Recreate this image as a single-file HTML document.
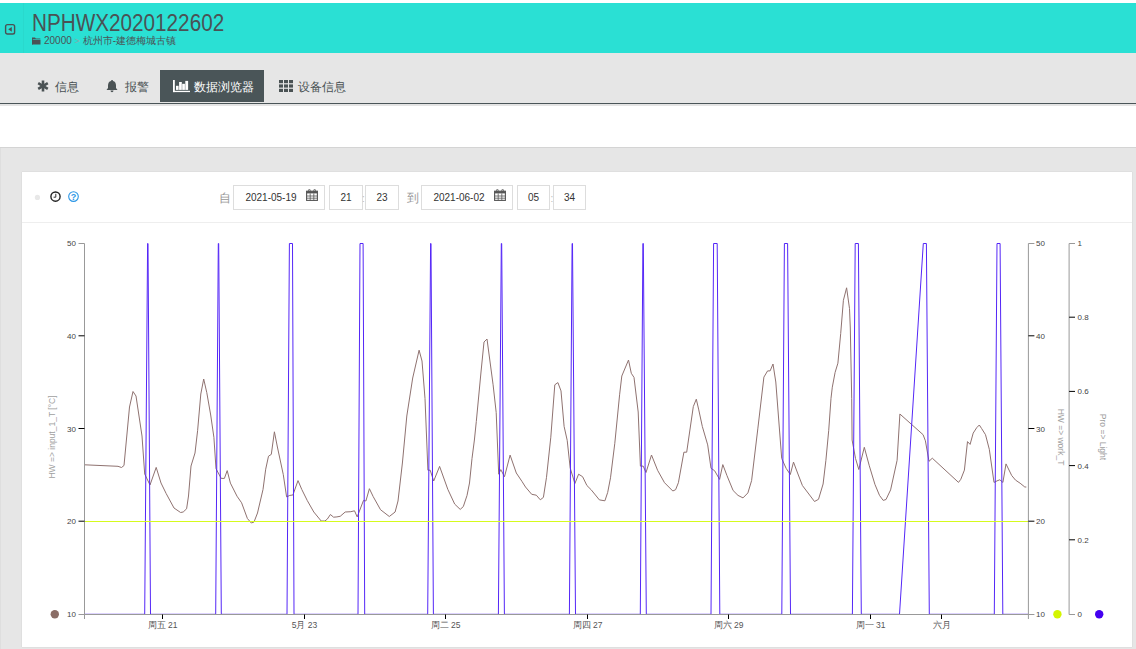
<!DOCTYPE html>
<html><head><meta charset="utf-8">
<style>
*{box-sizing:border-box;margin:0;padding:0}
html,body{width:1136px;height:649px;overflow:hidden;background:#e6e6e6;font-family:"Liberation Sans",sans-serif;position:relative}
.abs{position:absolute}
#top{left:0;top:0;width:1136px;height:3px;background:#fff}
#hdr{left:0;top:3px;width:1136px;height:50px;background:#2ae0d4}
#hdrdiv{left:22.5px;top:3px;width:1px;height:50px;background:#29d9cd}
#title{left:31.5px;top:9.5px;font-size:23px;color:#4a5254;line-height:26px;white-space:nowrap;transform:scaleX(0.9);transform-origin:0 0}
#sub{left:44px;top:35px;font-size:10px;color:#4a5254;line-height:12px;white-space:nowrap}
#tabs{left:0;top:53px;width:1136px;height:50px;background:#e6e6e6}
#tabline{left:0;top:103px;width:1136px;height:1px;background:#4a5558}
#tabline2{left:0;top:104px;width:1136px;height:2px;background:#e4e4e4}
.tab{top:70px;height:32px;font-size:12px;color:#4a5254;line-height:34px;white-space:nowrap}
#act{left:160px;width:104px;background:#4a5558;color:#fff}
#strip{left:0;top:106px;width:1136px;height:41px;background:#fff}
#stripb{left:0;top:147px;width:1136px;height:1px;background:#d4d4d4}
#panel{left:22px;top:172px;width:1110px;height:475px;background:#fff;box-shadow:0 0 1px rgba(0,0,0,.18)}
#tbline{left:22px;top:222px;width:1110px;height:1px;background:#eee}
.box{top:185px;height:25px;border:1px solid #ddd;background:#fff;font-size:10px;color:#333;line-height:23px;text-align:center;white-space:nowrap}
.lbl{top:186px;font-size:12px;color:#999;line-height:25px}
svg.full{position:absolute;left:0;top:0}
</style></head><body>
<div class="abs" id="top"></div>
<div class="abs" id="hdr"></div>
<div class="abs" id="hdrdiv"></div>
<svg class="abs" style="left:4px;top:23px" width="12" height="12" viewBox="0 0 12 12"><rect x="1.6" y="1.6" width="9" height="9.4" rx="1.8" fill="none" stroke="#4a5254" stroke-width="1.4"/><path d="M4.2,6.3 L7.8,3.9 V8.7 Z" fill="#4a5254"/></svg>
<div class="abs" id="title">NPHWX2020122602</div>
<svg class="abs" style="left:32px;top:36.5px" width="9" height="8" viewBox="0 0 9 8"><path d="M0,0.5 H3 L3.8,1.4 H8.3 V2.2 H0.8 V7.5 H0 Z" fill="#4a5254"/><rect x="0" y="2.8" width="8.5" height="4.7" fill="#4a5254"/></svg>
<div class="abs" id="sub">20000 <span style="color:#8aa;font-size:9px">&gt;</span> 杭州市-建德梅城古镇</div>
<div class="abs" id="tabs"></div>
<div class="abs tab" id="act"></div>
<div class="abs" id="tabline"></div>
<div class="abs" id="tabline2"></div>
<!-- tab contents -->
<svg class="abs" style="left:37px;top:80px" width="12" height="12" viewBox="0 0 12 12"><g stroke="#4a5254" stroke-width="2.6" stroke-linecap="butt"><line x1="6" y1="0.5" x2="6" y2="11.5"/><line x1="1.2" y1="3.2" x2="10.8" y2="8.8"/><line x1="1.2" y1="8.8" x2="10.8" y2="3.2"/></g></svg>
<div class="abs tab" style="left:55px">信息</div>
<svg class="abs" style="left:105px;top:79px" width="14" height="14" viewBox="0 0 14 14"><path d="M7,1 C7.6,1 8,1.4 8,1.9 C10,2.4 11,4 11,6.5 V9 L12.5,11 H1.5 L3,9 V6.5 C3,4 4,2.4 6,1.9 C6,1.4 6.4,1 7,1 Z" fill="#4a5254"/><path d="M5.5,11.6 H8.5 C8.4,12.5 7.8,13.2 7,13.2 C6.2,13.2 5.6,12.5 5.5,11.6Z" fill="#4a5254"/></svg>
<div class="abs tab" style="left:125px">报警</div>
<svg class="abs" style="left:168px;top:74px" width="30" height="24" viewBox="0 0 30 24"><g fill="#fff"><rect x="5" y="6" width="1.8" height="12.1"/><rect x="5" y="16.8" width="17" height="1.3"/><rect x="8" y="11.8" width="2.6" height="4.1"/><rect x="11.1" y="8" width="2.7" height="7.9"/><rect x="14.2" y="9.8" width="2.7" height="6.1"/><rect x="17.3" y="6.9" width="2.8" height="9"/></g></svg>
<div class="abs tab" style="left:194px;color:#fff">数据浏览器</div>
<svg class="abs" style="left:279px;top:80px" width="14" height="12" viewBox="0 0 14 12"><g fill="#4a5254"><rect x="0" y="0" width="4" height="3.2"/><rect x="5" y="0" width="4" height="3.2"/><rect x="10" y="0" width="4" height="3.2"/><rect x="0" y="4.4" width="4" height="3.2"/><rect x="5" y="4.4" width="4" height="3.2"/><rect x="10" y="4.4" width="4" height="3.2"/><rect x="0" y="8.8" width="4" height="3.2"/><rect x="5" y="8.8" width="4" height="3.2"/><rect x="10" y="8.8" width="4" height="3.2"/></g></svg>
<div class="abs tab" style="left:298px">设备信息</div>
<div class="abs" id="strip"></div>
<div class="abs" id="stripb"></div>
<div class="abs" style="left:0;top:148px;width:1px;height:501px;background:#dedede"></div>
<div class="abs" id="panel"></div>
<div class="abs" id="tbline"></div>
<!-- toolbar -->
<svg class="abs" style="left:30px;top:189px" width="52" height="16" viewBox="0 0 52 16"><circle cx="7.4" cy="8.4" r="2.6" fill="#e8e8e8"/><circle cx="25.5" cy="7.6" r="4.6" fill="none" stroke="#222" stroke-width="1.4"/><path d="M25.8,4.8 V8.2 H23.6" fill="none" stroke="#333" stroke-width="1"/><circle cx="43.5" cy="7.6" r="4.8" fill="none" stroke="#2a96e6" stroke-width="1.1"/><text x="43.5" y="11" text-anchor="middle" style="font-family:'Liberation Sans',sans-serif;font-size:9px;font-weight:bold;fill:#2a96e6">?</text></svg>
<div class="abs lbl" style="left:219px">自</div>
<div class="abs box" style="left:233px;width:92px;padding-right:16px">2021-05-19</div>
<div class="abs box" style="left:329px;width:34px">21</div>
<div class="abs lbl" style="left:362px;font-size:10px;color:#bbb">:</div>
<div class="abs box" style="left:365px;width:34px">23</div>
<div class="abs lbl" style="left:407px">到</div>
<div class="abs box" style="left:421px;width:92px;padding-right:16px">2021-06-02</div>
<div class="abs box" style="left:517px;width:33px">05</div>
<div class="abs lbl" style="left:550.5px;font-size:10px;color:#bbb">:</div>
<div class="abs box" style="left:553px;width:33px">34</div>
<svg class="abs" style="left:306px;top:189px" width="12" height="12" viewBox="0 0 12 12"><rect x="0.6" y="2.2" width="10.8" height="9.2" fill="none" stroke="#555" stroke-width="1.1"/><rect x="0.6" y="2.2" width="10.8" height="2.2" fill="#555"/><g stroke="#555" stroke-width="0.8"><line x1="0.6" y1="7" x2="11.4" y2="7"/><line x1="0.6" y1="9.2" x2="11.4" y2="9.2"/><line x1="4.2" y1="4.4" x2="4.2" y2="11.4"/><line x1="7.8" y1="4.4" x2="7.8" y2="11.4"/></g><rect x="2.6" y="0.3" width="1.6" height="3" rx="0.8" fill="none" stroke="#555" stroke-width="0.8"/><rect x="7.8" y="0.3" width="1.6" height="3" rx="0.8" fill="none" stroke="#555" stroke-width="0.8"/></svg>
<svg class="abs" style="left:494px;top:189px" width="12" height="12" viewBox="0 0 12 12"><rect x="0.6" y="2.2" width="10.8" height="9.2" fill="none" stroke="#555" stroke-width="1.1"/><rect x="0.6" y="2.2" width="10.8" height="2.2" fill="#555"/><g stroke="#555" stroke-width="0.8"><line x1="0.6" y1="7" x2="11.4" y2="7"/><line x1="0.6" y1="9.2" x2="11.4" y2="9.2"/><line x1="4.2" y1="4.4" x2="4.2" y2="11.4"/><line x1="7.8" y1="4.4" x2="7.8" y2="11.4"/></g><rect x="2.6" y="0.3" width="1.6" height="3" rx="0.8" fill="none" stroke="#555" stroke-width="0.8"/><rect x="7.8" y="0.3" width="1.6" height="3" rx="0.8" fill="none" stroke="#555" stroke-width="0.8"/></svg>
<svg class="full" width="1136" height="649" viewBox="0 0 1136 649">
<path d="M84.5,464.8 L118.0,466.3 L121.5,467.5 L124.0,465.5 L129.5,407.0 L133.0,391.5 L136.0,396.0 L142.0,436.0 L144.7,474.0 L150.0,485.0 L156.2,467.4 L161.0,483.0 L166.2,493.6 L174.0,508.0 L180.6,512.5 L183.2,512.0 L186.6,508.8 L188.5,496.0 L191.0,466.0 L195.0,453.0 L197.6,430.7 L200.8,394.0 L203.7,379.0 L206.8,392.7 L210.7,415.0 L213.9,437.3 L216.0,468.7 L221.2,478.4 L224.4,478.4 L227.2,470.6 L230.4,483.1 L237.0,496.2 L241.6,502.8 L247.4,518.5 L251.3,523.0 L254.0,522.0 L257.5,513.0 L263.0,489.5 L265.7,469.2 L268.5,456.2 L271.3,454.4 L274.4,431.8 L277.4,447.0 L283.3,474.7 L286.6,496.9 L289.8,495.4 L292.9,495.0 L298.0,480.6 L301.8,489.5 L307.3,500.6 L313.8,512.0 L321.2,521.0 L324.9,521.0 L327.3,519.1 L330.4,514.5 L333.6,517.2 L336.9,516.9 L340.2,516.3 L345.2,512.0 L350.8,511.7 L354.5,510.8 L357.2,516.9 L363.5,500.4 L365.9,501.0 L369.4,488.7 L373.2,496.6 L380.5,509.7 L389.3,516.5 L395.1,512.0 L398.0,501.0 L402.4,463.0 L406.8,416.0 L412.7,378.0 L419.1,350.2 L422.0,361.0 L425.0,398.5 L427.9,470.2 L430.2,470.2 L433.7,481.0 L439.6,466.4 L447.8,489.3 L454.7,504.1 L460.2,509.4 L463.3,506.6 L467.0,495.5 L469.5,483.0 L472.0,458.5 L474.4,440.0 L476.3,421.5 L481.0,372.0 L484.0,342.0 L487.0,339.0 L493.1,384.8 L496.2,412.5 L498.7,474.2 L500.8,469.6 L504.5,476.7 L510.1,455.1 L516.3,473.0 L521.9,481.3 L525.5,487.0 L531.7,494.3 L536.3,495.2 L540.3,499.8 L543.4,497.4 L546.5,477.3 L550.8,437.2 L554.8,384.8 L557.9,382.6 L561.0,390.9 L564.1,426.4 L567.2,440.3 L570.2,468.0 L574.9,483.5 L578.6,474.2 L582.6,476.7 L586.9,485.5 L591.1,489.7 L599.4,499.9 L604.9,500.8 L607.7,492.4 L610.5,477.8 L614.8,443.3 L619.6,394.8 L621.8,376.0 L628.5,360.0 L631.3,373.3 L634.0,377.4 L638.2,412.0 L640.4,466.1 L643.2,466.1 L646.0,472.5 L651.5,455.0 L657.6,470.3 L664.5,482.7 L672.8,491.0 L675.6,489.7 L678.4,482.7 L683.9,452.2 L686.7,452.2 L693.3,406.6 L696.3,399.2 L698.6,409.1 L702.3,426.4 L707.7,444.9 L711.0,468.3 L714.6,470.7 L719.6,479.4 L722.8,464.6 L727.0,475.7 L733.1,490.5 L738.0,495.4 L743.0,497.9 L747.9,492.9 L751.6,480.6 L757.8,428.9 L763.9,377.1 L767.6,370.9 L770.1,370.9 L773.0,364.0 L775.8,382.0 L781.7,458.4 L786.1,468.3 L790.3,474.5 L793.5,462.1 L797.2,472.0 L802.4,485.5 L814.5,501.5 L818.5,499.3 L823.1,484.0 L825.9,460.3 L828.7,430.7 L831.0,398.3 L832.3,387.2 L835.1,372.4 L837.9,363.2 L840.7,333.6 L843.4,300.3 L846.6,287.8 L849.5,308.6 L850.3,328.0 L851.7,398.3 L852.1,440.0 L855.5,458.4 L858.8,469.5 L864.3,447.3 L869.3,465.8 L874.9,484.3 L879.5,495.4 L883.2,500.4 L886.0,499.5 L890.6,489.9 L897.1,460.3 L899.9,414.0 L923.1,434.7 L925.4,440.8 L929.0,461.3 L932.3,458.2 L958.5,482.4 L960.8,479.3 L964.4,470.1 L967.5,441.6 L970.1,444.4 L973.2,433.1 L976.7,427.7 L979.3,425.0 L981.6,428.5 L985.5,434.7 L989.3,449.3 L994.0,482.4 L997.0,480.9 L999.8,479.8 L1002.9,482.4 L1006.0,463.9 L1011.7,475.5 L1015.5,480.1 L1020.1,483.2 L1024.8,487.0 L1026.3,487.0" fill="none" stroke="#8f7270" stroke-width="1"/>
<path d="M84.5,614.3 L144.7,614.3 L147.6,243.5 L148.0,243.5 L150.5,614.3 L215.7,614.3 L218.3,243.5 L218.7,243.5 L221.3,614.3 L287.0,614.3 L289.4,243.5 L292.5,243.5 L294.0,614.3 L358.0,614.3 L360.0,243.5 L363.1,243.5 L364.7,614.3 L427.7,614.3 L430.6,243.5 L431.0,243.5 L433.4,614.3 L498.4,614.3 L501.3,243.5 L501.7,243.5 L504.4,614.3 L569.4,614.3 L572.1,243.5 L572.5,243.5 L575.5,614.3 L640.3,614.3 L642.9,243.5 L643.3,243.5 L646.3,614.3 L711.0,614.3 L713.6,243.5 L717.2,243.5 L719.8,614.3 L781.8,614.3 L784.4,243.5 L787.6,243.5 L790.5,614.3 L852.4,614.3 L855.2,243.5 L858.4,243.5 L861.3,614.3 L899.5,614.3 L923.3,243.5 L926.4,243.5 L929.3,614.3 L994.3,614.3 L997.0,243.5 L1000.1,243.5 L1002.8,614.3 L1028.4,614.3" fill="none" stroke="#5426f7" stroke-width="1" stroke-linejoin="miter" stroke-miterlimit="3"/>
<line x1="84.5" x2="1028.4" y1="521.5" y2="521.5" stroke="#d6fb1e" stroke-width="1"/>
<path d="M78.5,243.5 H84.5 V614.5 H78.5" fill="none" stroke="#999" stroke-width="1"/>
<line x1="78.5" x2="84.5" y1="335.8" y2="335.8" stroke="#000"/>
<line x1="78.5" x2="84.5" y1="428.5" y2="428.5" stroke="#000"/>
<line x1="78.5" x2="84.5" y1="521.2" y2="521.2" stroke="#000"/>
<text x="76" y="246.0" text-anchor="end" style='font-family:"Liberation Sans",sans-serif;font-size:8px;fill:#444'>50</text>
<text x="76" y="338.8" text-anchor="end" style='font-family:"Liberation Sans",sans-serif;font-size:8px;fill:#444'>40</text>
<text x="76" y="431.5" text-anchor="end" style='font-family:"Liberation Sans",sans-serif;font-size:8px;fill:#444'>30</text>
<text x="76" y="524.2" text-anchor="end" style='font-family:"Liberation Sans",sans-serif;font-size:8px;fill:#444'>20</text>
<text x="76" y="617.0" text-anchor="end" style='font-family:"Liberation Sans",sans-serif;font-size:8px;fill:#444'>10</text>
<path d="M1034.4,243.5 H1028.4 V614.5 H1034.4" fill="none" stroke="#999"/>
<line x1="1028.4" x2="1034.4" y1="335.8" y2="335.8" stroke="#000"/>
<line x1="1028.4" x2="1034.4" y1="428.5" y2="428.5" stroke="#000"/>
<line x1="1028.4" x2="1034.4" y1="521.2" y2="521.2" stroke="#000"/>
<text x="1036" y="246.0" style='font-family:"Liberation Sans",sans-serif;font-size:8px;fill:#444'>50</text>
<text x="1036" y="338.8" style='font-family:"Liberation Sans",sans-serif;font-size:8px;fill:#444'>40</text>
<text x="1036" y="431.5" style='font-family:"Liberation Sans",sans-serif;font-size:8px;fill:#444'>30</text>
<text x="1036" y="524.2" style='font-family:"Liberation Sans",sans-serif;font-size:8px;fill:#444'>20</text>
<text x="1036" y="617.0" style='font-family:"Liberation Sans",sans-serif;font-size:8px;fill:#444'>10</text>
<path d="M1075,243.5 H1069.1 V614.5 H1075" fill="none" stroke="#999"/>
<text x="1077.5" y="246.0" style='font-family:"Liberation Sans",sans-serif;font-size:8px;fill:#444'>1</text>
<line x1="1069.1" x2="1075" y1="317.2" y2="317.2" stroke="#000"/>
<text x="1077.5" y="320.2" style='font-family:"Liberation Sans",sans-serif;font-size:8px;fill:#444'>0.8</text>
<line x1="1069.1" x2="1075" y1="391.4" y2="391.4" stroke="#000"/>
<text x="1077.5" y="394.4" style='font-family:"Liberation Sans",sans-serif;font-size:8px;fill:#444'>0.6</text>
<line x1="1069.1" x2="1075" y1="465.6" y2="465.6" stroke="#000"/>
<text x="1077.5" y="468.6" style='font-family:"Liberation Sans",sans-serif;font-size:8px;fill:#444'>0.4</text>
<line x1="1069.1" x2="1075" y1="539.8" y2="539.8" stroke="#000"/>
<text x="1077.5" y="542.8" style='font-family:"Liberation Sans",sans-serif;font-size:8px;fill:#444'>0.2</text>
<text x="1077.5" y="617.0" style='font-family:"Liberation Sans",sans-serif;font-size:8px;fill:#444'>0</text>
<path d="M84.5,619 V614.5 H1028.4 V619" fill="none" stroke="#999"/>
<line x1="162.5" x2="162.5" y1="614.5" y2="619" stroke="#000"/>
<text x="162.5" y="628" text-anchor="middle" style='font-family:"Liberation Sans",sans-serif;font-size:8px;fill:#444;font-size:8.5px;fill:#555'>周五 21</text>
<line x1="304.5" x2="304.5" y1="614.5" y2="619" stroke="#000"/>
<text x="304.5" y="628" text-anchor="middle" style='font-family:"Liberation Sans",sans-serif;font-size:8px;fill:#444;font-size:8.5px;fill:#555'>5月 23</text>
<line x1="445.5" x2="445.5" y1="614.5" y2="619" stroke="#000"/>
<text x="445.5" y="628" text-anchor="middle" style='font-family:"Liberation Sans",sans-serif;font-size:8px;fill:#444;font-size:8.5px;fill:#555'>周二 25</text>
<line x1="587.5" x2="587.5" y1="614.5" y2="619" stroke="#000"/>
<text x="587.5" y="628" text-anchor="middle" style='font-family:"Liberation Sans",sans-serif;font-size:8px;fill:#444;font-size:8.5px;fill:#555'>周四 27</text>
<line x1="728.5" x2="728.5" y1="614.5" y2="619" stroke="#000"/>
<text x="728.5" y="628" text-anchor="middle" style='font-family:"Liberation Sans",sans-serif;font-size:8px;fill:#444;font-size:8.5px;fill:#555'>周六 29</text>
<line x1="870.5" x2="870.5" y1="614.5" y2="619" stroke="#000"/>
<text x="870.5" y="628" text-anchor="middle" style='font-family:"Liberation Sans",sans-serif;font-size:8px;fill:#444;font-size:8.5px;fill:#555'>周一 31</text>
<line x1="941.5" x2="941.5" y1="614.5" y2="619" stroke="#000"/>
<text x="941.5" y="628" text-anchor="middle" style='font-family:"Liberation Sans",sans-serif;font-size:8px;fill:#444;font-size:8.5px;fill:#555'>六月</text>
<text transform="translate(55,437) rotate(-90)" text-anchor="middle" style='font-family:"Liberation Sans",sans-serif;font-size:8.5px;fill:#a0a0a0'>HW =&gt; input_1_T [°C]</text>
<text transform="translate(1057.5,437) rotate(90)" text-anchor="middle" style='font-family:"Liberation Sans",sans-serif;font-size:8.5px;fill:#a0a0a0'>HW =&gt; work_T</text>
<text transform="translate(1099.5,437) rotate(90)" text-anchor="middle" style='font-family:"Liberation Sans",sans-serif;font-size:8.5px;fill:#a0a0a0'>Pro =&gt; Light</text>
<circle cx="54.8" cy="614.2" r="4.2" fill="#8a6d66"/>
<circle cx="1057.4" cy="614.2" r="4.2" fill="#d4f500"/>
<circle cx="1099.2" cy="614.2" r="4.2" fill="#4400f0"/>
</svg>
</body></html>
